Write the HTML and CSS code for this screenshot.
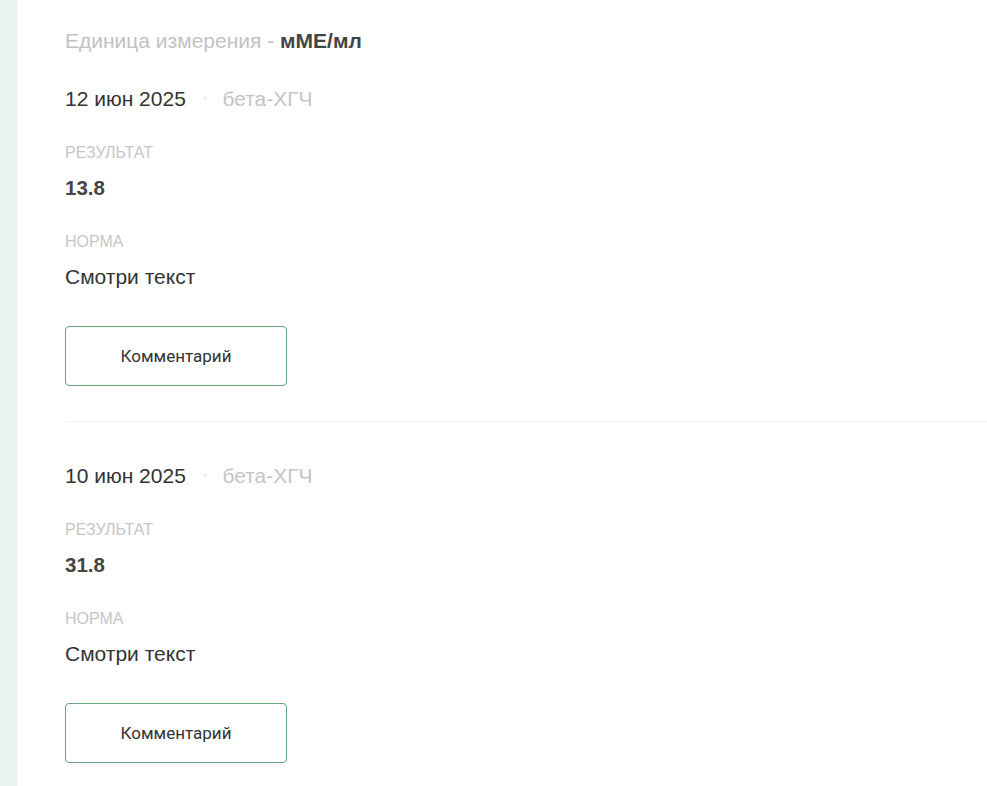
FILE: index.html
```html
<!DOCTYPE html>
<html lang="ru">
<head>
<meta charset="utf-8">
<title>Результаты</title>
<link rel="stylesheet" href="styles.css">
</head>
<body>
<div class="layout">
  <aside class="side"></aside>
  <main class="main">
    <div class="unit">Единица измерения - <b>мМЕ/мл</b></div>
    <section class="item">
      <div class="meta"><span class="date">12 июн 2025</span><span class="dot">•</span><span class="test">бета-ХГЧ</span></div>
      <div class="label">РЕЗУЛЬТАТ</div>
      <div class="value">13.8</div>
      <div class="label">НОРМА</div>
      <div class="norm">Смотри текст</div>
      <button class="btn">Комментарий</button>
    </section>
    <section class="item">
      <div class="meta"><span class="date">10 июн 2025</span><span class="dot">•</span><span class="test">бета-ХГЧ</span></div>
      <div class="label">РЕЗУЛЬТАТ</div>
      <div class="value">31.8</div>
      <div class="label">НОРМА</div>
      <div class="norm">Смотри текст</div>
      <button class="btn">Комментарий</button>
    </section>
  </main>
</div>
</body>
</html>
```
FILE: styles.css
```css
* { box-sizing: border-box; }
html, body { margin: 0; padding: 0; background: #fff; }
body { font-family: "Liberation Sans", Arial, sans-serif; color: #333; }
.layout { display: flex; min-height: 786px; }
.side { width: 17px; flex: none; background: #e9f2ed; }
.main { flex: 1; padding-left: 48px; }
.unit { padding-top: 29px; font-size: 21px; line-height: 24px; color: #c2c2c2; }
.unit b { color: #444; font-weight: bold; }
.item { padding: 34px 0 35px; display: flex; flex-direction: column; align-items: flex-start; }
.item + .item { border-top: 1px solid #f1f1f1; padding-top: 42px; }
.meta { font-size: 21px; line-height: 24px; display: flex; align-items: center; }
.date { color: #333; }
.dot { color: #ececec; font-size: 13px; margin: 0 15px 0 17px; }
.test { color: #c4c4c4; }
.label { font-size: 16px; line-height: 18px; color: #c6c6c6; margin-top: 33px; }
.value { font-size: 20.5px; line-height: 24px; font-weight: bold; color: #444; margin-top: 14px; }
.norm { font-size: 21px; line-height: 24px; color: #333; margin-top: 14px; }
.btn { margin-top: 37px; width: 222px; height: 60px; border: 1px solid #68a67e; border-radius: 4px; background: #fff; font-family: Roboto, "Liberation Sans", sans-serif; font-size: 17px; color: #333; cursor: pointer; }
```
